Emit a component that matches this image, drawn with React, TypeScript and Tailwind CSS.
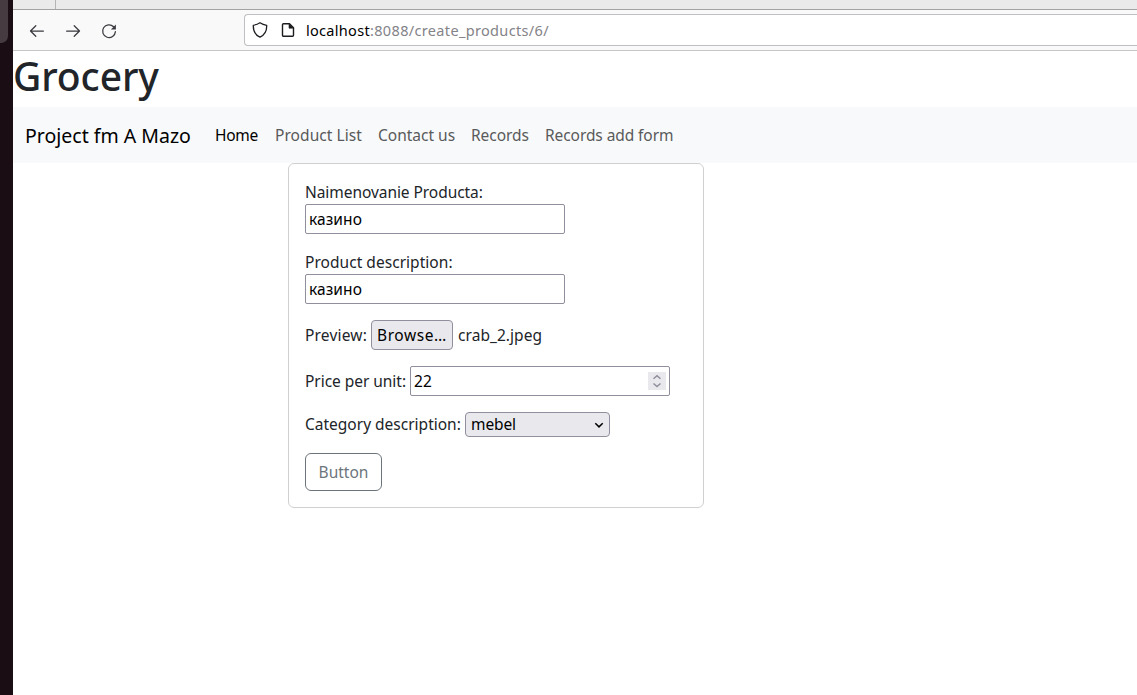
function Toolbar() {
  return (
    <header className="flex h-[41px] shrink-0 items-center border-b border-[#c6c6c6] bg-[#f9f9fa]">
      <svg className="mt-px ml-4 h-4 w-4 shrink-0" viewBox="0 0 16 16" fill="none" stroke="#3a3a3f" strokeWidth="1.25" strokeLinecap="round" strokeLinejoin="round">
        <path d="M14.400 8H1.600M6.800 2.700 1.500 8l5.300 5.300" />
      </svg>
      <svg className="mt-px ml-5 h-4 w-4 shrink-0" viewBox="0 0 16 16" fill="none" stroke="#3a3a3f" strokeWidth="1.25" strokeLinecap="round" strokeLinejoin="round">
        <path d="M1.600 8h12.800M9.200 2.700 14.500 8l-5.300 5.300" />
      </svg>
      <svg className="mt-px ml-5 h-4 w-4 shrink-0" viewBox="0 0 16 16" fill="none" stroke="#3a3a3f" strokeWidth="1.25" strokeLinecap="round">
        <path d="M14.400 8.600A6.400 6.400 0 1 1 12.600 3.700" />
        <path d="M14.900 1.400v5h-5z" fill="#3a3a3f" stroke="none" />
      </svg>
      <div className="ml-[127px] flex h-8 flex-1 items-center rounded-l-[4px] border border-r-0 border-[#bfbfc3] bg-white pl-[7px]">
        <svg className="h-4 w-4 shrink-0" viewBox="0 0 16 16" fill="none" stroke="#1c1c20" strokeWidth="1.3" strokeLinejoin="round">
          <path d="M8 .8c2 1.300 4.100 2.100 6.700 2.500.2 5.600-1.700 9.500-6.700 11.900C3 12.800 1.100 8.900 1.300 3.300 3.900 2.900 6 2.100 8 .8z" />
        </svg>
        <svg className="ml-3 h-4 w-4 shrink-0" viewBox="0 0 16 16" fill="none" stroke="#1c1c20" strokeWidth="1.4" strokeLinejoin="round">
          <path d="M3.500 1.700h6l4 4v7.600a1 1 0 0 1-1 1h-9a1 1 0 0 1-1-1V2.700a1 1 0 0 1 1-1z" />
          <path d="M9 1.700v4.500h4.500z" fill="#1c1c20" strokeWidth=".6" />
        </svg>
        <div className="ml-[10px] flex text-[14.5px] leading-5 whitespace-nowrap">
          <span className="w-16 tracking-[0.3px] text-black">localhost</span>
          <span className="tracking-[0.34px] text-[#838388]">:8088/create_products/6/</span>
        </div>
      </div>
    </header>
  );
}

function Navbar() {
  return (
    <nav className="flex h-14 shrink-0 items-center bg-[#f8f9fa] pl-3 whitespace-nowrap">
      <a className="w-[190px] pt-0.5 text-[19.5px] leading-[30px] text-black">Project fm A Mazo</a>
      <a className="w-[60px] tracking-[-0.28px] text-black">Home</a>
      <a className="w-[103px] tracking-[0.07px] text-[#595a5b]">Product List</a>
      <a className="w-[93px] text-[#595a5b]">Contact us</a>
      <a className="w-[74px] tracking-[-0.04px] text-[#595a5b]">Records</a>
      <a className="tracking-[-0.08px] text-[#595a5b]">Records add form</a>
    </nav>
  );
}

function ProductForm() {
  return (
    <form className="ml-[275px] flex h-[345px] w-[416px] flex-col gap-4 rounded-[6px] border border-[#d0d0d1] bg-white p-4 whitespace-nowrap">
      <div className="flex flex-col">
        <label className="tracking-[-0.06px]">Naimenovanie Producta:</label>
        <input type="text" defaultValue="казино" className="h-[30px] w-[260px] rounded-[2px] border border-[#8f8f9d] px-[3px] tracking-[0.09px] text-black outline-none" />
      </div>
      <div className="flex flex-col">
        <label className="tracking-[0.04px]">Product description:</label>
        <input type="text" defaultValue="казино" className="h-[30px] w-[260px] rounded-[2px] border border-[#8f8f9d] px-[3px] tracking-[0.09px] text-black outline-none" />
      </div>
      <div className="flex h-[30px] items-center">
        <label className="w-[66px] tracking-[0.18px]">Preview:</label>
        <button type="button" className="h-[30px] w-[82px] rounded-[4px] border border-[#8f8f9d] bg-[#e9e9ed] text-left indent-[5px] tracking-[0.59px] text-black">Browse…</button>
        <span className="ml-[5px] tracking-[0.05px]">crab_2.jpeg</span>
      </div>
      <div className="flex h-[30px] items-center">
        <label className="w-[105px] tracking-[-0.04px]">Price per unit:</label>
        <div className="flex h-[30px] w-[260px] items-center rounded-[2px] border border-[#8f8f9d] pr-[3px] pl-[3px]">
          <input type="text" inputMode="numeric" defaultValue="22" className="w-0 flex-1 tracking-[0.13px] text-black outline-none" />
          <span className="flex h-[18px] w-[18px] items-center justify-center bg-[#e9e9ed]">
            <svg className="h-[18px] w-[18px]" viewBox="0 0 18 18" fill="none" stroke="#8f8f9d" strokeWidth="1.5">
              <path d="M5.500 6.800 9 3.700l3.500 3.100M5.500 11.500 9 14.600l3.500-3.100" />
            </svg>
          </span>
        </div>
      </div>
      <div className="flex h-[25px] items-center">
        <label className="w-[160px] pb-0.5">Category description:</label>
        <button type="button" className="flex h-[25px] w-[145px] items-center justify-between rounded-[4px] border border-[#8f8f9d] bg-[#e9e9ed] pr-[5px] pl-[5px] text-black">
          <span className="pb-0.5 tracking-[-0.1px]">mebel</span>
          <svg className="h-[10px] w-[10px]" viewBox="0 0 10 10" fill="none" stroke="#000" strokeWidth="1.5">
            <path d="M1.300 3.300 5 6.900l3.700-3.600" />
          </svg>
        </button>
      </div>
      <button type="button" className="h-[38px] w-[77px] rounded-[6px] border border-[#6c757d] text-center text-[#6c757d]">Button</button>
    </form>
  );
}

export default function App() {
  return (
    <div className="flex h-[695px] w-full overflow-hidden bg-white font-['Noto_Sans',sans-serif] text-[15.5px] leading-6 text-[#212529]">
      <aside className="w-[13px] shrink-0 bg-[#1a0e14]">
        <div className="h-[43px] w-2 rounded-br-[7px] bg-[#453b40]" />
      </aside>
      <div className="flex min-w-0 flex-1 flex-col">
        <div className="h-[10px] shrink-0 border-b border-[#a3a3a4] bg-[#eaeaea]">
          <div className="h-full w-[43px] border-r border-[#b4b4b5]" />
        </div>
        <Toolbar />
        <h1 className="h-14 shrink-0 text-[39px] leading-[49px] font-medium tracking-[-0.1px]">Grocery</h1>
        <Navbar />
        <ProductForm />
      </div>
    </div>
  );
}
